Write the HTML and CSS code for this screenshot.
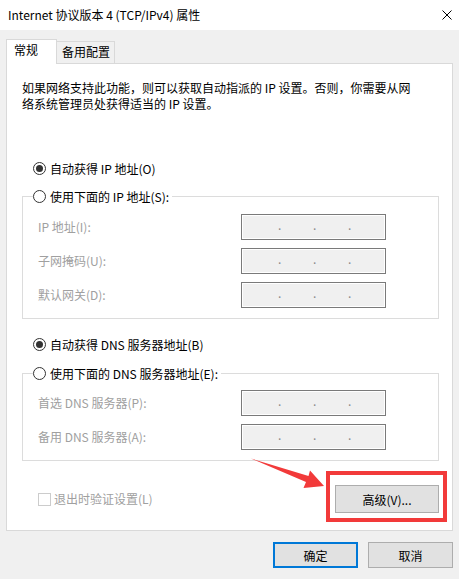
FILE: index.html
```html
<!DOCTYPE html>
<html lang="zh-CN">
<head>
<meta charset="utf-8">
<title>Internet 协议版本 4 (TCP/IPv4) 属性</title>
<link rel="stylesheet" href="styles.css">
</head>
<body>
<div class="titlebar">
  <span class="title">Internet 协议版本 4 (TCP/IPv4) 属性</span>
  <svg class="close" width="10" height="10" viewBox="0 0 10 10"><path d="M0.5 0.5L9.5 9.5M9.5 0.5L0.5 9.5" stroke="#000" stroke-width="1" fill="none"/></svg>
</div>
<div class="main">
  <div class="tabs">
    <div class="tab active">常规</div>
    <div class="tab">备用配置</div>
  </div>
  <div class="panel">
    <p class="desc">如果网络支持此功能，则可以获取自动指派的 IP 设置。否则，你需要从网<br>络系统管理员处获得适当的 IP 设置。</p>
    <div class="radio-row r1"><span class="radio checked"></span>自动获得 IP 地址(O)</div>
    <fieldset class="group g1">
      <legend><span class="radio"></span>使用下面的 IP 地址(S):</legend>
      <div class="fields f1">
        <span class="flabel">IP 地址(I):</span>
        <div class="ipbox"><span>.</span><span>.</span><span>.</span></div>
        <span class="flabel">子网掩码(U):</span>
        <div class="ipbox"><span>.</span><span>.</span><span>.</span></div>
        <span class="flabel">默认网关(D):</span>
        <div class="ipbox"><span>.</span><span>.</span><span>.</span></div>
      </div>
    </fieldset>
    <div class="radio-row r2"><span class="radio checked"></span>自动获得 DNS 服务器地址(B)</div>
    <fieldset class="group g2">
      <legend><span class="radio"></span>使用下面的 DNS 服务器地址(E):</legend>
      <div class="fields f2">
        <span class="flabel">首选 DNS 服务器(P):</span>
        <div class="ipbox"><span>.</span><span>.</span><span>.</span></div>
        <span class="flabel">备用 DNS 服务器(A):</span>
        <div class="ipbox"><span>.</span><span>.</span><span>.</span></div>
      </div>
    </fieldset>
    <div class="bottom-row">
      <div class="check"><span class="box"></span>退出时验证设置(L)</div>
      <div class="adv-wrap"><button class="btn adv">高级(V)...</button></div>
    </div>
  </div>
  <div class="actions">
    <button class="btn primary">确定</button>
    <button class="btn cancel">取消</button>
  </div>
</div>
<svg class="arrow" width="459" height="579" viewBox="0 0 459 579">
  <polygon points="251,458.5 308.5,476 310,470.5 324,486 303.5,488 306,482 " fill="#f23a3a"/>
</svg>
</body>
</html>
```
FILE: styles.css
```css
* { box-sizing: border-box; }
html, body { margin: 0; padding: 0; }
body {
  width: 459px;
  height: 579px;
  background: #f0f0f0;
  font-family: "Noto Sans CJK SC", "Microsoft YaHei", "Noto Sans", sans-serif;
  font-size: 12px;
  color: #000;
  position: relative;
  overflow: hidden;
}
.titlebar {
  height: 30px;
  background: #fff;
  display: flex;
  align-items: center;
  justify-content: space-between;
  padding: 0 7px 0 8px;
}
.title { line-height: 16px; }
.close { display: block; }

.main { padding: 9px 6px 0 6px; }

.tabs {
  display: flex;
  align-items: flex-start;
  margin-bottom: -1px;
  position: relative;
  z-index: 1;
}
.tab {
  height: 22px;
  width: 58px;
  margin-top: 2px;
  border: 1px solid #d9d9d9;
  border-left: none;
  border-bottom: none;
  background: #f0f0f0;
  padding: 2px 0 0 5px;
  line-height: 16px;
}
.tab.active {
  height: 25px;
  width: 51px;
  margin-top: 0;
  border-left: 1px solid #d9d9d9;
  background: #fff;
  padding: 2px 0 0 7px;
}

.panel {
  background: #fff;
  border: 1px solid #d9d9d9;
  height: 468px;
  padding: 16px 13px 0 15px;
}
.desc {
  margin: 0;
  line-height: 16px;
  white-space: nowrap;
}
.radio-row {
  display: flex;
  align-items: center;
  height: 16px;
  padding-left: 11px;
}
.r1 { margin-top: 48px; }
.r2 { margin-top: 17px; }
.radio {
  display: inline-block;
  width: 13px;
  height: 13px;
  border: 1px solid #333;
  border-radius: 50%;
  margin-right: 4px;
  position: relative;
  background: #fff;
  flex: none;
}
.radio.checked::after {
  content: "";
  position: absolute;
  left: 2px;
  top: 2px;
  width: 7px;
  height: 7px;
  border-radius: 50%;
  background: #333;
}
.group {
  margin: 0;
  padding: 0;
  border: 1px solid #dcdcdc;
  width: 417px;
  min-width: 0;
}
.g1 { margin-top: 12px; }
.g2 { margin-top: 13px; }
.group legend {
  display: flex;
  align-items: center;
  height: 16px;
  padding: 0 3px 0 0;
  margin-left: 10px;
}
.fields {
  display: grid;
  grid-template-columns: 203px 145px;
  grid-auto-rows: 26px;
  row-gap: 8px;
  align-items: center;
  padding: 10px 0 10px 15px;
}
.f2 { padding-top: 9px; }
.flabel {
  color: #a0a0a0;
  line-height: 16px;
}
.ipbox {
  height: 26px;
  border: 1px solid #7a7a7a;
  box-shadow: inset 0 0 0 1px #fff;
  background: #f0f0f0;
  display: flex;
  padding-left: 36px;
  gap: 31px;
  align-items: flex-start;
  color: #8a8a8a;
}
.ipbox span {
  width: 4px;
  line-height: 20px;
  font-size: 12px;
}

.bottom-row {
  margin-top: 24px;
  display: flex;
  justify-content: space-between;
  align-items: center;
  height: 28px;
}
.check {
  display: flex;
  align-items: center;
  padding-left: 16px;
  color: #a0a0a0;
  line-height: 16px;
}
.box {
  width: 13px;
  height: 13px;
  border: 1px solid #cccccc;
  background: #fff;
  margin-right: 3px;
  display: inline-block;
}
.adv-wrap { position: relative; }
.adv-wrap::after {
  content: "";
  position: absolute;
  left: -9px;
  right: -8px;
  top: -14px;
  bottom: -9px;
  border: 4px solid #f23a3a;
  pointer-events: none;
}
.btn {
  font-family: inherit;
  font-size: 12px;
  color: #000;
  background: #e1e1e1;
  border: 1px solid #adadad;
  margin: 0;
  padding: 0;
  display: flex;
  align-items: center;
  justify-content: center;
}
.adv { width: 104px; height: 28px; }
.actions {
  display: flex;
  justify-content: flex-end;
  gap: 10px;
  padding-top: 11px;
}
.primary {
  width: 85px;
  height: 26px;
  border: 2px solid #0078d7;
}
.cancel { width: 85px; height: 26px; }
.arrow {
  position: absolute;
  left: 0;
  top: 0;
  pointer-events: none;
}
```
